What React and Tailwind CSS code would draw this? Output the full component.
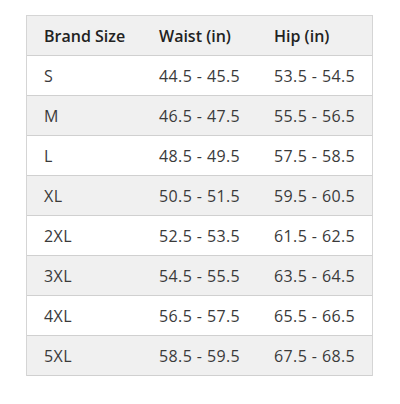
const rows = [
  ["S", "44.5 - 45.5", "53.5 - 54.5"],
  ["M", "46.5 - 47.5", "55.5 - 56.5"],
  ["L", "48.5 - 49.5", "57.5 - 58.5"],
  ["XL", "50.5 - 51.5", "59.5 - 60.5"],
  ["2XL", "52.5 - 53.5", "61.5 - 62.5"],
  ["3XL", "54.5 - 55.5", "63.5 - 64.5"],
  ["4XL", "56.5 - 57.5", "65.5 - 66.5"],
  ["5XL", "58.5 - 59.5", "67.5 - 68.5"],
];

export default function App() {
  return (
    <div className="w-[400px] h-[404px] bg-white pt-[15px] pl-[26px]" style={{ fontFamily: '"Open Sans", "Noto Sans", sans-serif' }}>
      <div className="w-[347px] border border-[#d5d5d5] border-b-0 text-[16px] text-[#3a3a3a]">
        <div className="grid grid-cols-[115px_115px_1fr] h-[40px] items-center bg-[#f0f0f0] border-b border-[#d0d0d0] font-semibold text-[#222]">
          <div className="pl-[17px]">Brand Size</div>
          <div className="pl-[17px]">Waist (in)</div>
          <div className="pl-[17px]">Hip (in)</div>
        </div>
        {rows.map((r, i) => (
          <div
            key={r[0]}
            className={`grid grid-cols-[115px_115px_1fr] h-[40px] items-center border-b border-[#d0d0d0] tracking-[0.4px] ${i % 2 === 1 ? "bg-[#f0f0f0]" : "bg-white"}`}
          >
            <div className="pl-[17px]">{r[0]}</div>
            <div className="pl-[17px]">{r[1]}</div>
            <div className="pl-[17px]">{r[2]}</div>
          </div>
        ))}
      </div>
    </div>
  );
}
